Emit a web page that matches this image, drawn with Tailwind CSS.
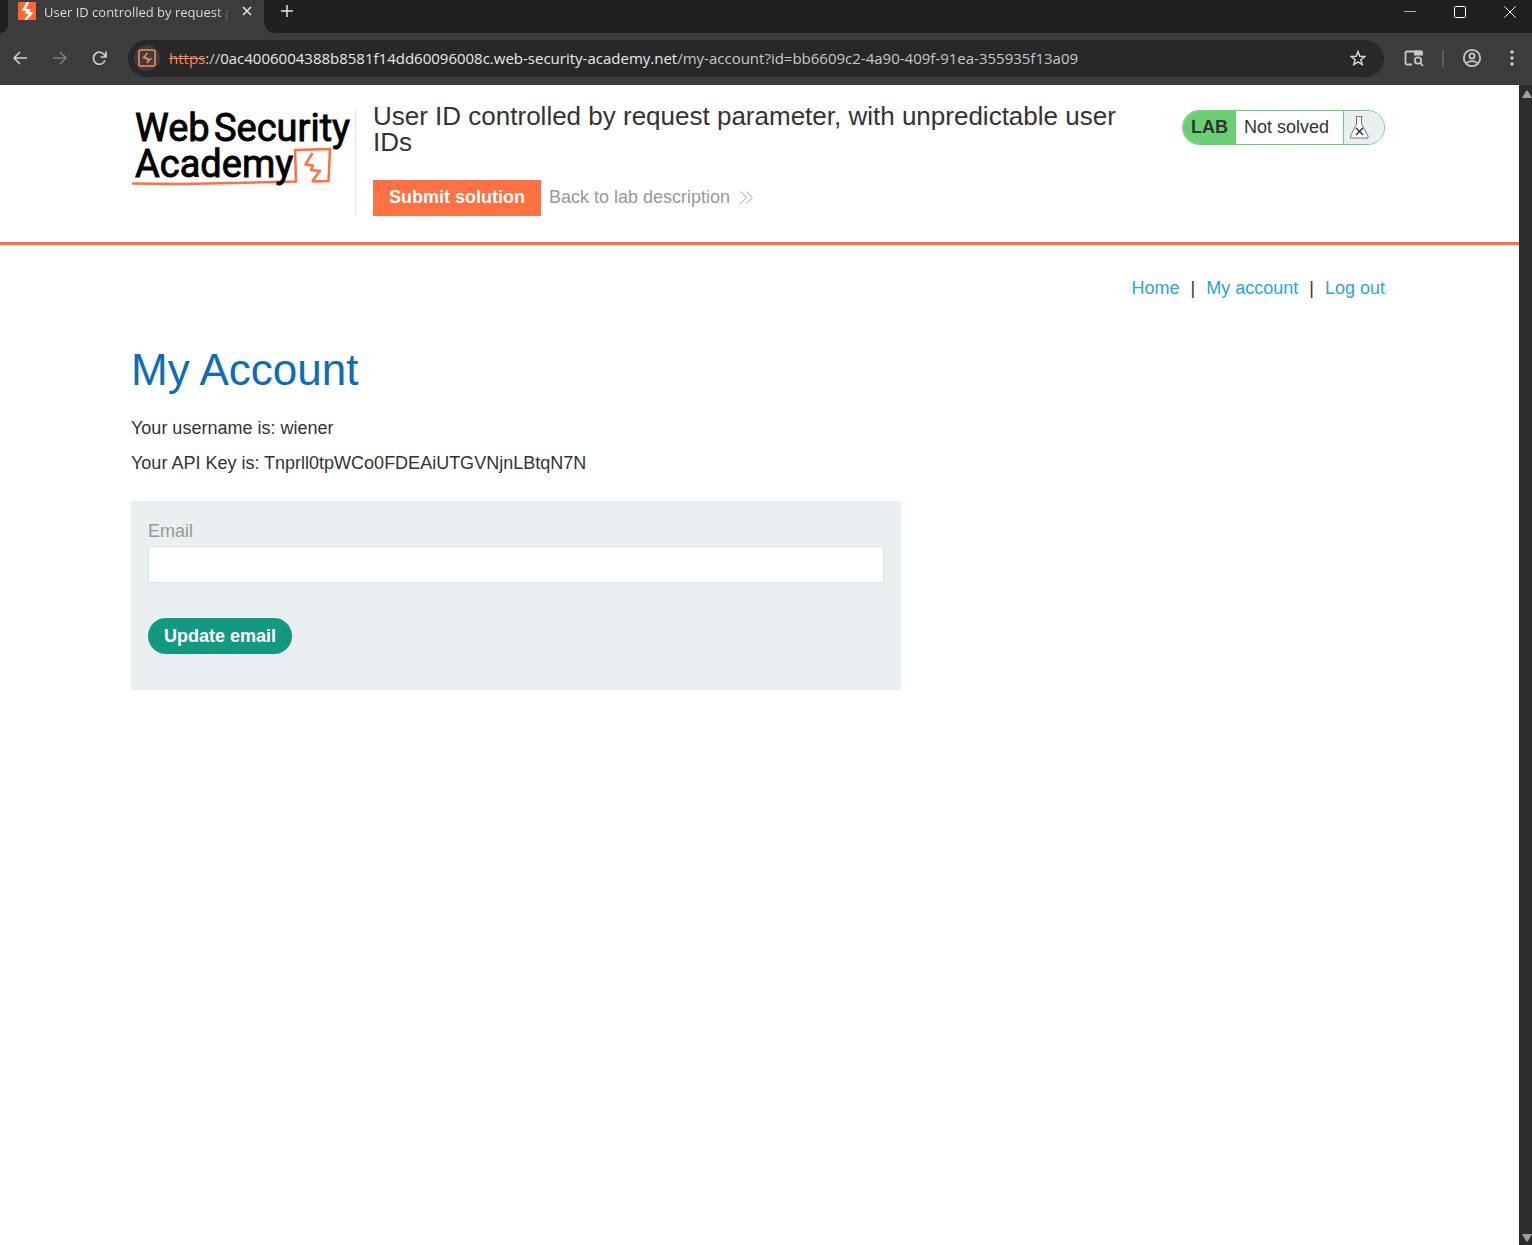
<!DOCTYPE html>
<html lang="en">
<head>
<meta charset="utf-8">
<title>User ID controlled by request parameter, with unpredictable user IDs</title>
<script src="https://cdn.jsdelivr.net/npm/@tailwindcss/browser@4"></script>
</head>
<body class="flex min-h-screen flex-col bg-white font-['Liberation_Sans',Arial,sans-serif] text-lg text-[#333332]">

<!-- Browser chrome -->
<div class="bg-[#3c3c3c] font-['Open_Sans','Noto_Sans',sans-serif] text-[#e3e3e3]">
  <div class="flex h-[33px] items-stretch bg-[#1f2120]">
    <div class="w-2 bg-[#3c3c3c]"><div class="h-full rounded-br-lg bg-[#1f2120]"></div></div>
    <div class="flex w-64 items-start bg-[#3c3c3c] pl-[10px]">
      <svg class="mt-[2px] h-[18px] w-[18px] shrink-0" viewBox="0 0 18 18"><path fill="#ff6633" d="M0 0h18v18H0z"/><path fill="none" stroke="#fff" stroke-width="2.600" d="M10 0L5.800 7.500l4.700.8L9 10.300l4 .9L7.500 18"/></svg>
      <span class="ml-2 h-6 w-[186px] overflow-hidden bg-linear-to-r from-[#e3e3e3] from-93% to-transparent bg-clip-text text-[13px] leading-6 whitespace-nowrap text-transparent">User ID controlled by request pa</span>
      <button aria-label="Close tab" class="ml-3 mt-[6px]"><svg class="h-[10px] w-[10px]" viewBox="0 0 10 10" stroke="#e3e3e3" stroke-width="1.600"><path d="M1 1l8 8M9 1L1 9"/></svg></button>
    </div>
    <div class="flex flex-1 bg-[#3c3c3c]">
      <div class="flex flex-1 items-start rounded-bl-xl bg-[#1f2120]">
        <button aria-label="New tab" class="ml-[17px] mt-[5px]"><svg class="h-3 w-3" viewBox="0 0 12 12" stroke="#e3e3e3" stroke-width="1.500"><path d="M6 0v12M0 6h12"/></svg></button>
        <div class="ml-auto mr-4 mt-[6px] flex gap-[38px]">
          <button aria-label="Minimize"><svg class="h-3 w-3" viewBox="0 0 12 12" stroke="#b0b0b0"><path d="M0 5.500h12"/></svg></button>
          <button aria-label="Maximize"><svg class="h-3 w-3" viewBox="0 0 12 12" fill="none" stroke="#fff"><rect x=".5" y=".5" width="11" height="11" rx="1"/></svg></button>
          <button aria-label="Close"><svg class="h-3 w-3" viewBox="0 0 12 12" stroke="#fff"><path d="M.5.5l11 11M11.500.5l-11 11"/></svg></button>
        </div>
      </div>
    </div>
  </div>
  <div class="flex h-[52px] items-center pb-[2px] pl-3">
    <button aria-label="Back" class="mr-6"><svg class="h-4 w-4" viewBox="0 0 16 16" fill="none" stroke="#d0d0d0" stroke-width="1.600"><path d="M15 8H2M8 2L2 8l6 6"/></svg></button>
    <button aria-label="Forward" class="mr-6"><svg class="h-4 w-4" viewBox="0 0 16 16" fill="none" stroke="#7c7c7c" stroke-width="1.600"><path d="M1 8h13M8 2l6 6-6 6"/></svg></button>
    <button aria-label="Reload" class="mr-[21px]"><svg class="h-[15px] w-[15px]" viewBox="0 0 15 15" fill="none" stroke="#d0d0d0" stroke-width="1.700"><path d="M13 9.500A6 6 0 1 1 12.500 4L13.500 5.500M14 .5V6H8.500"/></svg></button>
    <div class="mr-5 flex h-[37px] flex-1 items-center rounded-full bg-[#282828] pr-[18px] pl-[6px]">
      <span class="mr-[9px] flex h-[26px] w-[26px] items-center justify-center rounded-full bg-[#3c3c3c]"><svg class="h-[18px] w-[18px]" viewBox="0 0 18 18" fill="none" stroke="#ff8659"><rect x="1" y="1" width="16" height="16" rx="2" stroke-width="1.600"/><path stroke-width="1.500" d="M9.500 4L5.500 8.700l3.500.5v1.500l3.500-.7L9 14"/></svg></span>
      <span class="text-[15px] leading-5 whitespace-nowrap text-[#c7c7c7]"><span class="text-[#ff8659] line-through">https</span>://<span class="text-[#e9e9e9]">0ac4006004388b8581f14dd60096008c.web-security-academy.net</span>/my-account?id=bb6609c2-4a90-409f-91ea-355935f13a09</span>
      <button aria-label="Bookmark" class="ml-auto"><svg class="h-4 w-4" viewBox="0 0 16 16" fill="none" stroke="#d6d6d6" stroke-width="1.500"><path d="M8 1.500l1.800 4.700 5 .3-3.900 3.200 1.300 4.900L8 11.900l-4.200 2.700 1.300-4.900L1.200 6.500l5-.3z"/></svg></button>
    </div>
    <button aria-label="Search tabs"><svg class="h-[18px] w-5" viewBox="0 0 20 18" fill="none" stroke="#c7c7c7" stroke-width="1.800"><path d="M8 15.500H3A1.500 1.500 0 0 1 1.500 14V4A1.500 1.500 0 0 1 3 2.500h14"/><path d="M10 1.500h7.500A1.500 1.500 0 0 1 19 3v3.500h-9z" fill="#c7c7c7" stroke="none"/><circle cx="14" cy="11.500" r="3.200"/><path d="M16.300 14l2.700 3"/></svg></button>
    <span class="mx-[18px] h-[17px] w-[2px] bg-[#5c5c5c]"></span>
    <button aria-label="Profile"><svg class="h-5 w-5" viewBox="0 0 20 20" fill="none" stroke="#c7c7c7" stroke-width="1.800"><circle cx="10" cy="10" r="8.200"/><circle cx="10" cy="8" r="2.600"/><path d="M4 15.500c3-3.300 9-3.300 12 0"/></svg></button>
    <button aria-label="Menu" class="mr-[10px] ml-5"><svg class="h-5 w-5" viewBox="0 0 20 20" fill="#d0d0d0"><circle cx="10" cy="4" r="1.700"/><circle cx="10" cy="10" r="1.700"/><circle cx="10" cy="16" r="1.700"/></svg></button>
  </div>
</div>

<div class="flex flex-1">
  <div class="min-w-0 flex-1">
    <header class="border-b-3 border-[#ff7042] pt-[25px] pr-[134px] pb-[26px] pl-[131px]">
      <div class="flex items-start">
        <a href="#" aria-label="Web Security Academy" class="flex h-[106px] w-[225px] shrink-0 border-r border-[#e3e3e3]">
          <svg class="h-20 w-[224px]" viewBox="0 0 224 80" font-family="Roboto, sans-serif" font-size="38">
            <g fill="none" stroke="#ff7042" stroke-width="2.500" stroke-linejoin="round"><path d="M1 73.500l50 .5 114-2.500-1-31.500 35-1-1.500 32-16 .500"/><path d="M181.500 43l-7 11.500 7.500 1-2 4.500 9 1-8 10.500"/></g>
            <g fill="#000" stroke="#000" stroke-width=".9"><text x="4" y="31">Web</text><text x="83" y="31">Security</text><text x="4" y="67">Academy</text></g>
          </svg>
        </a>
        <div class="ml-[17px] min-w-0 flex-1">
          <h2 class="-mt-[7px] max-w-[770px] text-[26px] leading-[26px]">User ID controlled by request parameter, with unpredictable user IDs</h2>
          <div class="mt-[25px] flex items-center gap-2">
            <button class="h-9 bg-[#ff7042] px-4 pb-[2px] font-bold text-white">Submit solution</button>
            <a href="#" class="flex items-center gap-[10px] pb-[2px] text-[#999]">Back to lab description
              <svg class="h-[13px] w-[13px]" viewBox="0 0 13 13" fill="none" stroke="#aaa"><path d="M.5.5l6 6-6 6M6.500.5l6 6-6 6"/></svg></a>
          </div>
        </div>
        <div class="flex h-[35px] w-[203px] shrink-0 overflow-hidden rounded-full border border-[#6bcf74] leading-[33px]">
          <span class="w-[53px] bg-[#6bcf74] pl-2 font-bold">LAB</span>
          <span class="flex-1 pl-2">Not solved</span>
          <span class="w-[41px] border-l border-[#6bcf74] bg-[#eaeff2] pt-[5px] pl-[6px]"><svg class="h-[23px] w-[19px]" viewBox="0 0 19 23" fill="#fff" stroke="#777"><path d="M5.500.5h7M6.500.5V8L.5 20v2h17.500v-2L11.500 8V.5"/><path stroke="#222" stroke-width="1.300" d="M6 12l7 7M13 12l-7 7"/></svg></span>
        </div>
      </div>
    </header>

    <main class="pt-[31px] pr-[134px] pl-[131px]">
      <nav class="flex justify-end gap-[11px] leading-6">
        <a href="#" class="text-[#29a6de]">Home</a><span>|</span><a href="#" class="text-[#29a6de]">My account</a><span>|</span><a href="#" class="text-[#29a6de]">Log out</a>
      </nav>
      <h1 class="mt-10 text-[44px] leading-[60px] text-[#0f6cb6]">My Account</h1>
      <p class="mt-4 leading-6">Your username is: wiener</p>
      <p class="mt-[11px] leading-6">Your API Key is: Tnprll0tpWCo0FDEAiUTGVNjnLBtqN7N</p>
      <form class="mt-[26px] max-w-[770px] bg-[#eaeff2] px-[17px] pt-[18px] pb-9">
        <label for="email" class="block leading-6 text-[#999]">Email</label>
        <input id="email" type="email" class="mt-[3px] block h-[37px] w-full border border-[#e0e3e4] bg-white px-2">
        <button type="button" class="mt-[35px] h-9 rounded-full bg-[#12997f] px-4 font-bold text-white">Update email</button>
      </form>
    </main>
  </div>
  <div class="flex w-[13px] flex-col items-end justify-between overflow-hidden bg-[#2c2c2c] pt-[5px] pb-[3px]">
    <svg class="h-2 w-[10px]" viewBox="0 0 10 8" fill="#9f9f9f"><path d="M0 8l4-7q1-1 2 0l4 7z"/></svg>
    <svg class="h-2 w-[10px]" viewBox="0 0 10 8" fill="#9f9f9f"><path d="M0 0l4 7q1 1 2 0l4-7z"/></svg>
  </div>
</div>
</body>
</html>
